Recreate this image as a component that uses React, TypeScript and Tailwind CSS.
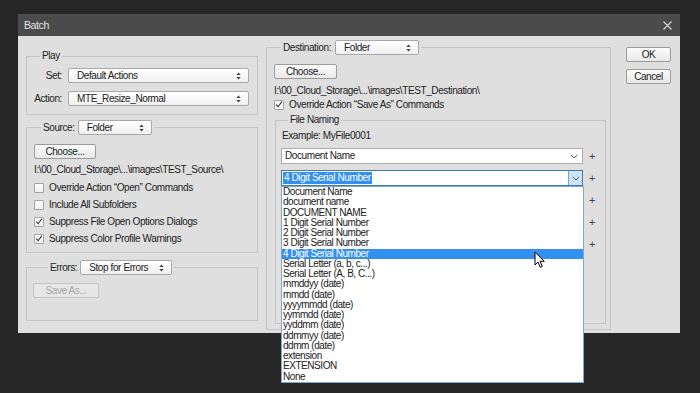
import React from 'react'

const UpDown = () => (
  <svg width="5" height="8" viewBox="0 0 5 8" className="shrink-0">
    <path d="M2.5 0.5 L4.7 3 L0.3 3 Z M2.5 7.5 L4.7 5 L0.3 5 Z" fill="#444" />
  </svg>
)

const Chevron = () => (
  <svg width="8" height="5" viewBox="0 0 8 5">
    <path d="M0.8 0.8 L4 4 L7.2 0.8" fill="none" stroke="#555" strokeWidth="1" />
  </svg>
)

const PsSelect = ({ value, w }: { value: string; w: string }) => (
  <div
    className={`${w} h-[15px] flex items-center justify-between pl-[8px] pr-[7px] border border-[#a9a9a9] rounded-[2px] bg-gradient-to-b from-[#ffffff] to-[#f0f0f0] text-[10px] leading-none whitespace-nowrap text-[#222]`}
  >
    <span>{value}</span>
    <UpDown />
  </div>
)

const PsButton = ({ label, w, disabled }: { label: string; w: string; disabled?: boolean }) => (
  <div
    className={`${w} h-[15px] flex items-center justify-center rounded-[2px] border text-[10px] leading-none ${
      disabled
        ? 'border-[#c4c4c4] bg-[#e6e6e6] text-[#a6a6a6]'
        : 'border-[#9b9b9b] bg-gradient-to-b from-[#fbfbfb] to-[#e9e9e9] text-[#222]'
    }`}
  >
    {label}
  </div>
)

const Check = ({ checked, label }: { checked?: boolean; label: string }) => (
  <div className="h-[17px] flex items-center gap-[5px]">
    <div className="w-[10px] h-[10px] border border-[#a5a5a5] rounded-[1px] bg-gradient-to-b from-[#fdfdfd] to-[#efefef] flex items-center justify-center">
      {checked && (
        <svg width="9" height="9" viewBox="0 0 9 9">
          <path d="M1.3 4.6 L3.5 7 L7.8 1.2" fill="none" stroke="#333" strokeWidth="1.2" />
        </svg>
      )}
    </div>
    <span className="text-[10px] leading-none whitespace-nowrap text-[#222]">{label}</span>
  </div>
)

const Plus = () => <span className="ml-[6px] text-[11px] leading-none text-[#444]">+</span>

const Combo = ({ value }: { value: string }) => (
  <div className="flex items-center h-[16px]">
    <div className="w-[302px] h-[16px] flex items-center justify-between pl-[3px] pr-[4px] border border-[#acacac] bg-white text-[10px] leading-none text-[#222]">
      <span>{value}</span>
      <Chevron />
    </div>
    <Plus />
  </div>
)

const options = [
  'Document Name',
  'document name',
  'DOCUMENT NAME',
  '1 Digit Serial Number',
  '2 Digit Serial Number',
  '3 Digit Serial Number',
  '4 Digit Serial Number',
  'Serial Letter (a, b, c...)',
  'Serial Letter (A, B, C...)',
  'mmddyy (date)',
  'mmdd (date)',
  'yyyymmdd (date)',
  'yymmdd (date)',
  'yyddmm (date)',
  'ddmmyy (date)',
  'ddmm (date)',
  'extension',
  'EXTENSION',
  'None',
]

const App = () => {
  return (
    <div className="w-[700px] h-[393px] bg-[#262626] overflow-hidden pt-[14px] pl-[18px] font-['Liberation_Sans',Arial,sans-serif] tracking-[-0.4px]">
      <div className="w-[662px]">
        {/* title bar */}
        <div className="h-[22px] bg-[#4b4b4b] flex items-center justify-between pl-[6px] pr-[8px]">
          <span className="text-[10.5px] text-[#e4e4e4] leading-none">Batch</span>
          <svg width="9" height="9" viewBox="0 0 9 9">
            <path d="M0.5 0.5 L8.5 8.5 M8.5 0.5 L0.5 8.5" stroke="#d2d2d2" strokeWidth="1.2" />
          </svg>
        </div>

        <div className="h-[297px] bg-[#dfdfdf] flex items-start">
          {/* left column */}
          <div className="ml-[8px] w-[232px] flex flex-col">
            <fieldset className="mt-[14px] border border-[#c5c5c5] pb-[8px]">
              <legend className="ml-[13px] px-[2px] h-[12px] text-[10px] leading-[12px] text-[#222]">Play</legend>
              <div className="mt-[6px] flex items-center gap-[6px]">
                <span className="w-[35px] text-right text-[10px] leading-none text-[#222]">Set:</span>
                <PsSelect value="Default Actions" w="w-[181px]" />
              </div>
              <div className="mt-[8px] flex items-center gap-[6px]">
                <span className="w-[35px] text-right text-[10px] leading-none text-[#222]">Action:</span>
                <PsSelect value="MTE_Resize_Normal" w="w-[181px]" />
              </div>
            </fieldset>

            <fieldset className="mt-[5px] border border-[#c5c5c5] pl-[7px] pb-[5px]">
              <legend className="ml-[7px] px-[2px] flex items-center gap-[3px]">
                <span className="text-[10px] leading-none text-[#222]">Source:</span>
                <PsSelect value="Folder" w="w-[74px]" />
              </legend>
              <div className="mt-[9px]">
                <PsButton label="Choose..." w="w-[62px]" />
              </div>
              <div className="mt-[5px] h-[12px] text-[10px] leading-[12px] whitespace-nowrap text-[#222]">
                I:\00_Cloud_Storage\...\images\TEST_Source\
              </div>
              <div className="mt-[3px] flex flex-col">
                <Check label={'Override Action \u201COpen\u201D Commands'} />
                <Check label="Include All Subfolders" />
                <Check checked label="Suppress File Open Options Dialogs" />
                <Check checked label="Suppress Color Profile Warnings" />
              </div>
            </fieldset>

            <fieldset className="mt-[7px] border border-[#c5c5c5] pl-[6px] pb-[22px]">
              <legend className="ml-[15px] px-[2px] flex items-center gap-[3px]">
                <span className="text-[10px] leading-none text-[#222]">Errors:</span>
                <PsSelect value="Stop for Errors" w="w-[92px]" />
              </legend>
              <div className="mt-[8px]">
                <PsButton label="Save As..." w="w-[66px]" disabled />
              </div>
            </fieldset>
          </div>

          {/* right column */}
          <fieldset className="ml-[8px] mt-[4px] w-[345px] border border-[#c5c5c5] pl-[7px] pb-[5px]">
            <legend className="ml-[7px] px-[2px] flex items-center gap-[4px]">
              <span className="text-[10px] leading-none text-[#222]">Destination:</span>
              <PsSelect value="Folder" w="w-[84px]" />
            </legend>
            <div className="mt-[9px]">
              <PsButton label="Choose..." w="w-[63px]" />
            </div>
            <div className="mt-[6px] h-[12px] text-[10px] leading-[12px] whitespace-nowrap text-[#222]">
              I:\00_Cloud_Storage\...\images\TEST_Destination\
            </div>
            <div className="-mt-[1px]">
              <Check checked label={'Override Action \u201CSave As\u201D Commands'} />
            </div>
            <fieldset className="mt-[1px] ml-[1px] w-[331px] border border-[#c5c5c5] pl-[5px] pb-[71px]">
              <legend className="ml-[7px] px-[2px] h-[12px] text-[10px] leading-[12px] text-[#222]">File Naming</legend>
              <div className="mt-[4px] ml-[1px] h-[12px] text-[10px] leading-[12px] text-[#222]">Example: MyFile0001</div>
              <div className="mt-[6px] flex flex-col gap-[6px]">
                <Combo value="Document Name" />

                {/* open combo */}
                <div className="relative flex items-center h-[16px]">
                  <div className="w-[302px] h-[16px] flex items-center justify-between border border-[#3d7bad] bg-white">
                    <span className="ml-[1px] px-[1px] h-[12px] bg-[#3390f0] text-white text-[10px] leading-[12px] whitespace-nowrap">
                      4 Digit Serial Number
                    </span>
                    <div className="w-[14px] h-full flex items-center justify-center bg-[#cde4f7] border-l border-[#6aa6da]">
                      <Chevron />
                    </div>
                  </div>
                  <Plus />

                  <div className="absolute left-0 top-[16px] w-[303px] h-[197px] border border-[#7ea8cf] bg-white flex flex-col z-10">
                    {options.map((o) => (
                      <div
                        key={o}
                        className={`h-[10.26px] pl-[1px] text-[10px] tracking-[-0.45px] leading-[10.26px] whitespace-nowrap ${
                          o === '4 Digit Serial Number' ? 'bg-[#3390f0] text-white' : 'text-[#1a1a1a]'
                        }`}
                      >
                        {o}
                      </div>
                    ))}
                    <svg className="absolute left-[252px] top-[64px]" width="12" height="18" viewBox="0 0 12 18">
                      <path d="M1 1 L1 14 L4 11 L6.3 16.3 L8.3 15.4 L6.1 10.3 L10.3 10.3 Z" fill="#fff" stroke="#000" strokeWidth="1" strokeLinejoin="round" />
                    </svg>
                  </div>
                </div>

                <Combo value="" />
                <Combo value="" />
                <Combo value="" />
              </div>
            </fieldset>
          </fieldset>

          {/* buttons */}
          <div className="ml-[15px] mt-[11px] flex flex-col gap-[7px]">
            <PsButton label="OK" w="w-[45px]" />
            <PsButton label="Cancel" w="w-[45px]" />
          </div>
        </div>
      </div>
    </div>
  )
}

export default App
